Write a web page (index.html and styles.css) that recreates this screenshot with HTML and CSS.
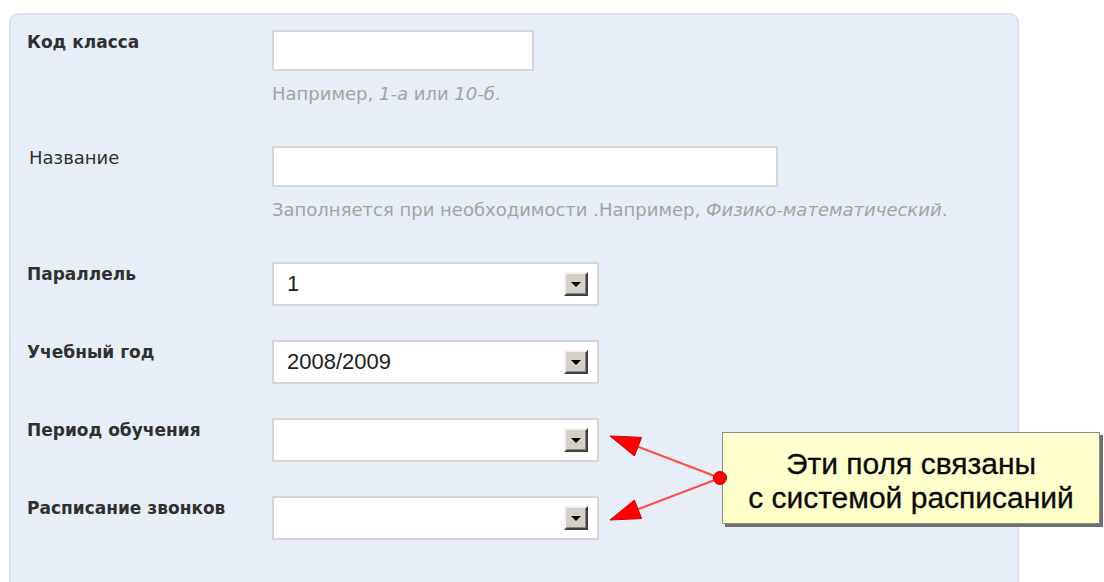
FILE: index.html
```html
<!DOCTYPE html>
<html lang="ru">
<head>
<meta charset="utf-8">
<title>Класс</title>
<link rel="stylesheet" href="styles.css">
</head>
<body>
<div class="panel">
  <div class="row">
    <div class="lbl bold">Код класса</div>
    <div class="field">
      <div class="input w-short"></div>
      <div class="hint">Например, <i>1-а</i> или <i>10-б</i>.</div>
    </div>
  </div>

  <div class="row">
    <div class="lbl">Название</div>
    <div class="field">
      <div class="input w-long"></div>
      <div class="hint">Заполняется при необходимости .Например, <i>Физико-математический</i>.</div>
    </div>
  </div>

  <div class="row">
    <div class="lbl bold">Параллель</div>
    <div class="field">
      <div class="select"><span class="val">1</span><span class="btn"><span class="tri"></span></span></div>
    </div>
  </div>

  <div class="row">
    <div class="lbl bold">Учебный год</div>
    <div class="field">
      <div class="select"><span class="val">2008/2009</span><span class="btn"><span class="tri"></span></span></div>
    </div>
  </div>

  <div class="row">
    <div class="lbl bold">Период обучения</div>
    <div class="field">
      <div class="select"><span class="val"></span><span class="btn"><span class="tri"></span></span></div>
    </div>
  </div>

  <div class="row">
    <div class="lbl bold">Расписание звонков</div>
    <div class="field">
      <div class="select"><span class="val"></span><span class="btn"><span class="tri"></span></span></div>
    </div>
  </div>
</div>

<div class="note">Эти поля связаны<br>с системой расписаний</div>

<!-- pointers from the note to the two schedule-related selects -->
<svg class="pointers" width="140" height="110" viewBox="600 425 140 110">
  <line x1="720" y1="478" x2="636" y2="446" stroke="#ff4a4a" stroke-width="2"/>
  <line x1="720" y1="478" x2="636" y2="510" stroke="#ff4a4a" stroke-width="2"/>
  <polygon points="610,436 641.6,437.4 634.4,456" fill="#f00" stroke="#d00000" stroke-width="1" stroke-linejoin="round"/>
  <polygon points="610,520 641.6,518.6 634.4,500" fill="#f00" stroke="#d00000" stroke-width="1" stroke-linejoin="round"/>
  <circle cx="720" cy="478" r="6.5" fill="#f00" stroke="#c00000" stroke-width="1"/>
</svg>
</body>
</html>
```

FILE: styles.css
```css
html, body {
  margin: 0;
  padding: 0;
  background: #ffffff;
  overflow: hidden;
}

body {
  width: 1104px;
  height: 582px;
  position: relative;
  font-family: "DejaVu Sans", "Liberation Sans", sans-serif;
}

.panel {
  margin: 13px 0 0 9px;
  width: 1010px;
  height: 569px;
  box-sizing: border-box;
  background: #e8eef7;
  border: 2px solid #dbe2ea;
  border-bottom: none;
  border-radius: 9px 9px 0 0;
  padding: 15px 0 0 16px;
  display: flex;
  flex-direction: column;
  gap: 34px;
}

.row {
  display: grid;
  grid-template-columns: 245px 1fr;
  align-items: start;
}

.panel > .row:nth-child(2),
.panel > .row:nth-child(3) {
  margin-top: 8px;
}

.lbl {
  font-size: 18px;
  line-height: 24px;
  color: #303030;
  padding-left: 2px;
  white-space: nowrap;
}

.lbl.bold {
  font-size: 17px;
  font-weight: bold;
  padding-left: 0;
}

.field {
  display: flex;
  flex-direction: column;
}

.input {
  height: 41px;
  box-sizing: border-box;
  background: #ffffff;
  border: 2px solid #d6d6d6;
}

.w-short { width: 262px; }
.w-long { width: 506px; }

.hint {
  margin-top: 13px;
  font-size: 18px;
  line-height: 20px;
  color: #a3a3a3;
  white-space: nowrap;
}

.hint i {
  font-style: italic;
}

.select {
  width: 327px;
  height: 44px;
  box-sizing: border-box;
  background: #ffffff;
  border: 2px solid #d6d6d6;
  display: flex;
  align-items: center;
  justify-content: space-between;
  padding: 0 9px 0 13px;
}

.val {
  font-family: "Liberation Sans", Arial, sans-serif;
  font-size: 22px;
  color: #1e1e1e;
}

/* classic bevelled drop-down button */
.btn {
  width: 24px;
  height: 24px;
  box-sizing: border-box;
  background: #d4d0c8;
  border-top: 2px solid #f4f2ee;
  border-left: 2px solid #f4f2ee;
  border-right: 2px solid #404040;
  border-bottom: 2px solid #404040;
  box-shadow: inset -1px -1px 0 #8a8780;
  display: flex;
  align-items: center;
  justify-content: center;
}

.tri {
  width: 0;
  height: 0;
  border-left: 5px solid transparent;
  border-right: 5px solid transparent;
  border-top: 5px solid #000;
  margin-top: 1px;
}

.pointers {
  position: absolute;
  left: 600px;
  top: 425px;
}

.note {
  position: absolute;
  left: 722px;
  top: 432px;
  width: 378px;
  height: 92px;
  box-sizing: border-box;
  padding-top: 5px;
  background: linear-gradient(#ffffd2, #ffffc6);
  border: 1px solid #8c8c8c;
  box-shadow: 3px 3px 0 #6e6e6e;
  display: flex;
  align-items: center;
  justify-content: center;
  text-align: center;
  font-family: "Liberation Sans", Arial, sans-serif;
  font-size: 30px;
  line-height: 34px;
  color: #0a0a0a;
  -webkit-text-stroke: 0.3px #0a0a0a;
}
```
